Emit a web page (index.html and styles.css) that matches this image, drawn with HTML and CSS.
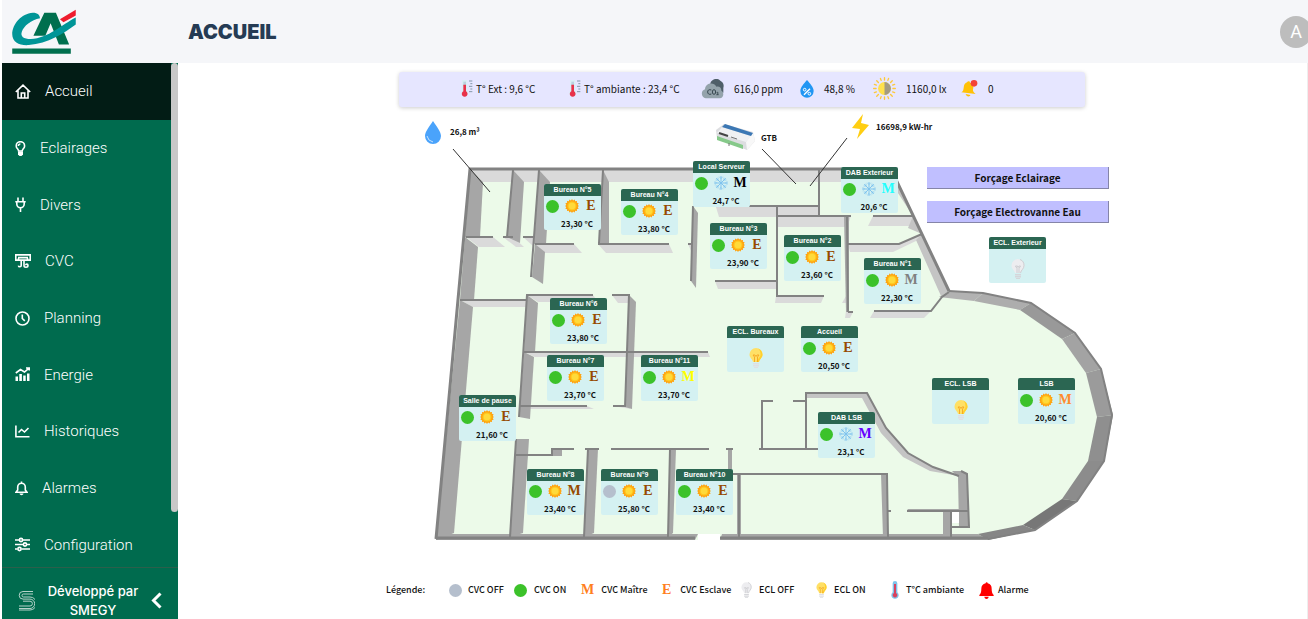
FILE: index.html
```html
<!DOCTYPE html>
<html lang="fr">
<head>
  <meta charset="UTF-8">
  <meta name="viewport" content="width=device-width, initial-scale=1.0">
  <title>Accueil</title>
  <link rel="stylesheet" href="styles.css">
</head>
<body>
  <!-- Shared icons -->
  <svg class="sprite" aria-hidden="true">
    <symbol id="i-sun" viewBox="0 0 28 28">
      <path fill="#ffa410" d="M14 0l2.2 3 3.2-2 1 3.600 3.700-.6-.4 3.700 3.600 1-1.900 3.200L28 14l-2.600 2.100 1.900 3.200-3.600 1 .4 3.700-3.700-.6-1 3.600-3.200-2L14 28l-2.200-3-3.200 2-1-3.600-3.700.6.4-3.700-3.600-1 1.900-3.200L0 14l2.600-2.100-1.900-3.200 3.600-1-.4-3.700 3.700.6 1-3.600 3.200 2z"/>
      <circle cx="14" cy="14" r="9" fill="#ffc81e"/>
      <circle cx="14" cy="14" r="6.500" fill="#ffda3a"/>
    </symbol>
    <symbol id="i-snow" viewBox="0 0 28 28">
      <g stroke="#7fc3ee" stroke-width="2" stroke-linecap="round" fill="none">
        <path d="M14 1v26M1 14h26M5 5l18 18M23 5L5 23"/>
        <path stroke-width="1.400" d="M11 2l3 3 3-3M11 26l3-3 3 3M2 11l3 3-3 3M26 11l-3 3 3 3M4 8h4V4M24 8h-4V4M4 20h4v4M24 20h-4v4"/>
      </g>
    </symbol>
    <symbol id="i-bulb-on" viewBox="0 0 28 40">
      <path fill="#ffe066" d="M14 0a13 13 0 0 1 13 13c0 7-6 9-7 15H8C7 22 1 20 1 13A13 13 0 0 1 14 0z"/>
      <path fill="#ffd02e" d="M18 1a13 13 0 0 1 9 12c0 7-6 9-7 15h-5c2-7 8-9 8-15S21 3 18 1z"/>
      <path stroke="#f5a623" stroke-width="1.800" fill="none" d="M11 28V18l-3-4h4l2 3 2-3h4l-3 4v10"/>
      <path fill="#dfe0e4" d="M8 30h12v3H8zM8 34h12v3H8zM10 38h8v2h-8z"/>
    </symbol>
    <symbol id="i-bulb-off" viewBox="0 0 28 40">
      <path fill="#ededf0" d="M14 0a13 13 0 0 1 13 13c0 7-6 9-7 15H8C7 22 1 20 1 13A13 13 0 0 1 14 0z"/>
      <path fill="none" stroke="#c9c9ce" stroke-width="1.800" d="M18 1c6 2 8 7 8 12 0 7-6 9-7 15M12 28V19l-3-5h4l1 3 2-3h3l-3 5v9"/>
      <path fill="#d5d6da" d="M8 30h12v3H8zM8 34h12v3H8zM10 38h8v2h-8z"/>
    </symbol>
    <symbol id="i-thermo" viewBox="0 0 36 54">
      <path fill="#d9eef5" d="M3 5a7 7 0 0 1 16 0v28a10 10 0 1 1-16 0z"/>
      <path fill="#b9d2de" d="M7 5h8v12H7z"/>
      <path fill="#e8324a" d="M7 14h8v20a8.500 8.500 0 1 1-8 0z"/>
      <path stroke="#6f8798" stroke-width="2.500" d="M24 3h10M28 11h6M24 19h10M28 27h6M24 35h10"/>
    </symbol>
  </svg>

  <header class="topbar">
    <a class="brand" href="#" aria-label="Accueil">
      <svg viewBox="36 26 192 136" width="64" height="45">
        <path fill="#006f4e" d="M133 37h35l40 96h-31l-25-64-16 38h-36z"/>
        <path fill="#009597" d="M120 54C119 44 114 37 98 37 64 39 36 72 36 102c0 24 22 35 50 33 58-4 106-36 142-62V52c-40 20-83 63-136 65-22 0-32-8-27-22 6-18 28-36 55-41z"/>
        <path fill="#ee1c2e" d="M180 57l48-29v18l-37 20z"/>
        <path fill="#006f4e" d="M36 145h177v16H36z"/>
      </svg>
    </a>
    <h1>ACCUEIL</h1>
    <button class="avatar" type="button" aria-label="Compte">A</button>
  </header>

  <div class="layout">
    <aside class="sidebar">
      <div class="menu-wrap">
        <nav class="menu">
          <a class="active" href="#"><svg width="16" height="15" viewBox="0 0 16 15"><path d="M.8 8L8 1.200 15.200 8M3 6.500V14h10V6.500M6.300 14V9h3.400v5"/></svg>Accueil</a>
          <a href="#"><svg width="11" height="15" viewBox="0 0 11 15"><path d="M3.600 10C3.500 8 1.200 7.500 1.200 4.900a4.200 4.200 0 0 1 8.400 0C9.600 7.500 7.300 8 7.200 10zM3.400 5c0-1.300.8-2 2-2"/><path class="solid" d="M3 10.500h5v3L6.500 15h-2L3 13.500z"/></svg>Eclairages</a>
          <a href="#"><svg width="11" height="15" viewBox="0 0 11 15"><path d="M3 .5V4M8 .5V4M.3 4.700h10.400M1.800 5v2a3.700 3.700 0 0 0 7.400 0V5M5.500 10.700V15"/></svg>Divers</a>
          <a href="#"><svg width="16" height="15" viewBox="0 0 16 15"><path d="M.8.900h14.400v5.200H.8zM3 3.600h10M3.500 4v2M12.500 4v2M6.200 7v4.600c0 1.600-2.600 1.600-2.800 0M9 7v4.500c0 2.300 4 2.300 4 0 0-1.900-2.300-1.700-2.300-.3"/></svg>CVC</a>
          <a href="#"><svg width="15" height="15" viewBox="0 0 15 15"><circle cx="7.500" cy="7.500" r="6.500"/><path d="M7.300 3.500v4l2.500 2.400"/></svg>Planning</a>
          <a href="#"><svg width="15" height="15" viewBox="0 0 15 15"><path d="M.8 6L5.500 2.500l4 2.500L14 1.200M11 1h3.300v2.500"/><path class="solid" d="M.5 9.500h2.500V14H.5zM4.300 7h2.600v7H4.300zM8.200 8.500h2.500V14H8.200zM12 6.500h2.500V14H12z"/></svg>Energie</a>
          <a href="#"><svg width="15" height="15" viewBox="0 0 15 15"><path d="M.9 1.500v11.300h13.600M3.500 8.500l3-3 3 2.500 4-4"/></svg>Historiques</a>
          <a href="#"><svg width="13" height="15" viewBox="0 0 13 15"><path d="M1 11.300h11L10.300 9V6a3.800 3.800 0 0 0-7.600 0v3zM6.500.5V2"/><path class="solid" d="M4.500 12.600h4c-.4 2.300-3.600 2.300-4 0z"/></svg>Alarmes</a>
          <a href="#"><svg width="15" height="15" viewBox="0 0 15 15"><path d="M0 3h4M8 3h7M0 7.500h8M12 7.500h3M0 12h2.500M6.500 12H15"/><circle cx="6" cy="3" r="1.600"/><circle cx="10" cy="7.500" r="1.600"/><circle cx="4.500" cy="12" r="1.600"/></svg>Configuration</a>
        </nav>
        <div class="scrollbar"><div class="thumb"></div></div>
      </div>
      <div class="credit">
        <svg width="17" height="21" viewBox="0 0 17 21"><path d="M15 1.500H5a3.800 3.800 0 0 0 0 7.600h7a4.600 4.600 0 0 1 0 9.400H1M15 4H5.500a1.500 1.500 0 0 0 0 3H12a6.500 6.500 0 0 1 0 13H1M1 16h11a2.400 2.400 0 0 0 0-4.800H5"/></svg>
        <p>Développé par SMEGY</p>
        <button type="button" aria-label="Réduire le menu"><svg width="11" height="17" viewBox="0 0 11 17"><path d="M9.500 1.500l-7 7 7 7"/></svg></button>
      </div>
    </aside>

    <main>
      <div class="board">
        <section class="measures">
          <div class="measure near"><svg width="12" height="18"><use href="#i-thermo"/></svg>T° Ext : 9,6 °C</div>
          <div class="measure near"><svg width="12" height="18"><use href="#i-thermo"/></svg>T° ambiante : 23,4 °C</div>
          <div class="measure">
            <svg width="23" height="20" viewBox="0 0 69 60"><path fill="#4f5f69" d="M28 22a18 18 0 0 1 30-17c8 4 12 12 9 22v14H40z"/><path fill="#94a3ab" d="M14 58a14 14 0 0 1-2-27c1-20 27-23 34-8 10-2 16 5 15 12 9 4 8 23-5 23z"/><g fill="none" stroke="#37474f" stroke-width="3"><path d="M31 33c-8-3-11 1-11 6s4 9 11 6"/><ellipse cx="39" cy="39" rx="5" ry="7"/><path d="M47 41c5-3 6 2 0 6h6"/></g></svg>
            616,0 ppm
          </div>
          <div class="measure">
            <svg width="14" height="18" viewBox="0 0 42 54"><path fill="#2196f3" d="M21 0c9 11 20 22 20 33a20 20 0 0 1-40 0C1 22 12 11 21 0z"/><path stroke="#fff" stroke-width="4" fill="none" d="M12 44l18-18"/><circle cx="14" cy="29" r="4" fill="none" stroke="#fff" stroke-width="3"/><circle cx="28" cy="41" r="4" fill="none" stroke="#fff" stroke-width="3"/></svg>
            48,8 %
          </div>
          <div class="measure">
            <svg width="23" height="23" viewBox="0 0 68 68"><path stroke="#fdc93a" stroke-width="4" stroke-linecap="round" d="M34 2v7M34 59v7M2 34h7M59 34h7M11 11l5 5M52 52l5 5M57 11l-5 5M16 52l-5 5M22 4l2 6M44 58l2 6M46 4l-2 6M24 58l-2 6M4 22l6 2M58 44l6 2M4 46l6-2M58 24l6-2"/><circle cx="34" cy="34" r="19" fill="#ffe14d"/><path fill="#a39b82" d="M34 15a19 19 0 0 1 0 38z"/></svg>
            1160,0 lx
          </div>
          <div class="measure">
            <svg width="17" height="17" viewBox="0 0 51 51"><path fill="#ffc107" d="M18 7c3-5 9-3 9 1 8 2 12 10 9 20-1 5 2 9 8 14L1 37c6-4 6-7 7-14C9 14 12 9 18 7zM14 42l14 3c-1 7-13 5-14-3z"/><circle cx="39" cy="10" r="10" fill="#f44336"/></svg>
            0
          </div>
        </section>

        <section class="plan" id="plan">
          <svg class="floor" viewBox="373 107 740 468" aria-hidden="true">
            <path class="ground" d="M470 169H891L949 291 983 293 1031 303 1075 333 1101 369 1113 415 1104 461 1077 501 1035 530 988 540H720V534H698V540H436z"/>

            <!-- light faces -->
            <g class="face light">
              <path d="M470 169H891L897 182H483z"/>
              <path d="M466 237H493L505 247H479z"/>
              <path d="M503 237H513L524 247H516z"/>
              <path d="M523 237H534L533 246z"/>
              <path d="M535 244H574L582 253H545z"/>
              <path d="M598 244H669L673 253H606z"/>
              <path d="M688 244H692V253z"/>
              <path d="M460 300H527V307H473z"/>
              <path d="M527 295H593L598 302H538z"/>
              <path d="M612 295H630V303H618z"/>
              <path d="M524 352H708L710 357H535z"/>
              <path d="M519 406H587L594 409H531z"/>
              <path d="M613 406H626L631 409z"/>
              <path d="M716 207H776V217H719z"/>
              <path d="M777 206H819V216H777z"/>
              <path d="M777 216H851L847 227H778z"/>
              <path d="M873 216H913L918 226H868z"/>
              <path d="M848 244H899L922 234 916 241 893 252H850z"/>
              <path d="M715 281H776V289H718z"/>
              <path d="M776 296H824L821 303H775z"/>
              <path d="M842 303L846 296V303z"/>
              <path d="M874 311H931L924 318H870z"/>
              <path d="M846 311L845 318H850L853 312z"/>
            </g>
            <path class="face mid" d="M806 393H867L886 428 908 453 933 467 959 476 930 471 903 457 881 433 862 398H806z"/>
            <path class="face mid" d="M897 182L949 291 941 296 916 240 922 234 908 228 913 216 896 190z"/>

            <!-- dark faces -->
            <g class="face dark">
              <path d="M470 169L483 182 480 237H465z"/>
              <path d="M465 237L478 247 474 300H460z"/>
              <path d="M460 300L473 307 454 533 436 540z"/>
              <path d="M513 170L524 182 520 243 507 237z"/>
              <path d="M539 170L550 182 546 244H534z"/>
              <path d="M535 244L545 252 543 284 532 277z"/>
              <path d="M603 170L609 182V244H599z"/>
              <path d="M693 206L698 213 696 288 691 281z"/>
              <path d="M527 295L538 303 535 352H524z"/>
              <path d="M524 352L534 357 530 419 519 417z"/>
              <path d="M629 295L636 302 632 409 625 407z"/>
              <path d="M516 439H529L523 533 510 537z"/>
              <path d="M552 449H562V456H552z"/>
              <path d="M588 449H598L594 533 584 537z"/>
              <path d="M670 449H676L673 533 668 537z"/>
              <path d="M728 449H732V470H728z"/>
              <path d="M844 216H849V312H846z"/>
              <path d="M737 474H741V534H737z"/>
              <path d="M881 474H887L888 537H883z"/>
              <path d="M943 511H951V537H943z"/>
              <path d="M952 471H961L967 474 969 527H959L958 477z"/>
              <path d="M907 509H968V512H911z"/>
              <path d="M436 534H698L695 540H436z"/>
              <path d="M722 534H978L988 540H720z"/>
            </g>
            <path class="hole" d="M952 512H959V523H952z"/>

            <!-- round end wall -->
            <path fill="#b2b2b2" d="M949 291L983 293 974 301 939 297z"/>
            <path fill="#adadad" d="M983 293L1031 303 1020 310 974 301z"/>
            <path fill="#999" d="M1031 303L1075 333 1062 339 1020 310z"/>
            <path fill="#a3a3a3" d="M1075 333L1101 369 1086 373 1062 339z"/>
            <path fill="#9b9b9b" d="M1101 369L1113 415 1097 417 1086 373z"/>
            <path fill="#8f8f8f" d="M1113 415L1104 461 1088 461 1097 417z"/>
            <path fill="#8c8c8c" d="M1104 461L1077 501 1062 499 1088 461z"/>
            <path fill="#777" d="M1077 501L1035 530 1023 525 1062 499z"/>
            <path fill="#868686" d="M1035 530L988 540 978 534 1023 525z"/>

            <!-- wall tops -->
            <g class="edge">
              <path class="thick" d="M436 539L470 169H891L949 291"/>
              <path d="M949 291L983 293 1031 303 1075 333 1101 369 1112 415 1104 461 1077 501 1035 530 988 539"/>
              <path class="thick" d="M436 538H695M720 538H988"/>
              <path d="M513 170L507 237M539 170L531 277M603 170L599 243M693 206L691 281"/>
              <path d="M466 237H493M503 237H513M523 237H534M535 244H574M598 244H669M688 244H692"/>
              <path d="M460 300H527M519 417L527 295H593M612 295H629L625 407M524 352H708M519 406H587M613 406H626"/>
              <path d="M516 439L510 537M516 455H552V449H574M585 449H599M588 449L584 537M611 449H709M670 449L668 537M726 449H733"/>
              <path d="M749 206H819M777 206V296H824M777 216H851M819 170V216M873 216H913M847 216L848 312M715 281H776"/>
              <path d="M848 244H899L922 234M874 311H931L942 297 949 292M848 312H853"/>
              <path d="M773 401H762V449M793 401H806M806 449V393H867L886 428 908 453 933 467 959 476M759 449H818"/>
              <path d="M733 474H887L888 537M739 474V537M907 511H968M951 511V538M952 527H969L967 474 961 471M888 511H891"/>
            </g>
            <path class="pointer" d="M453 149L490 192M762 149L796 184M847 138L810 186"/>

            <!-- water meter -->
            <path fill="#4aa3fb" d="M433 121c4 6 8 11 8 15a8 8 0 0 1-16 0c0-4 4-9 8-15z"/>
            <path fill="none" stroke="#c5e2fe" d="M427 136q1 5 6 6"/>
            <!-- energy meter -->
            <path fill="#ffce12" d="M863 114l-11 14 8 1-3 10 12-14-8-2z"/>
            <!-- controller -->
            <path fill="#dcdde0" d="M724 124l29 8 2 9-8 9-30-12-1-8z"/>
            <path fill="#f8f8f8" d="M753 132l2 9-8 9-1-8z"/>
            <path fill="#f0f1f3" d="M722 127l29 9-5 6-29-9z"/>
            <path fill="#3c78b4" d="M725 124l28 9-2 3-29-9z"/>
            <path fill="#86c98a" d="M717 136l26 9v4l-26-9z"/>
            <path stroke="#444" stroke-width="2" d="M719 133l9 3"/>
            <path stroke="#777" d="M731 137l6 2M729 143v3"/>
          </svg>
          <span class="tag water">26,8 m³</span>
          <span class="tag gtb">GTB</span>
          <span class="tag energy">16698,9 kW-hr</span>
          <div class="actions">
            <button type="button">Forçage Eclairage</button>
            <button type="button">Forçage Electrovanne Eau</button>
          </div>
        </section>

        <section class="legend">
          <b>Légende:</b>
          <div><i class="dot off"></i>CVC OFF</div>
          <div class="wide"><i class="dot"></i>CVC ON</div>
          <div class="wide"><i class="role">M</i>CVC Maître</div>
          <div class="wider"><i class="role">E</i>CVC Esclave</div>
          <div class="wide"><svg width="11" height="16"><use href="#i-bulb-off"/></svg>ECL OFF</div>
          <div class="wide"><svg width="11" height="16"><use href="#i-bulb-on"/></svg>ECL ON</div>
          <div><svg width="10" height="18" viewBox="0 0 30 54"><path fill="#7fc4ea" d="M8 7a7 7 0 0 1 14 0v27a11 11 0 1 1-14 0z"/><path fill="#d9435f" d="M12 9h6v27a7 7 0 1 1-6 0z"/></svg>T°C ambiante</div>
          <div class="close"><svg width="15" height="17" viewBox="0 0 45 51"><path fill="#f00" d="M20 4a3 3 0 0 1 6 0c9 2 12 8 12 16 0 11 2 14 6 19v3H1v-3c4-5 6-8 6-19C7 12 11 6 20 4zM16 44h13c-1 9-12 9-13 0z"/></svg>Alarme</div>
        </section>
      </div>
    </main>
  </div>

  <script>
    const originX = 373;
    const originY = 107;

    // mode: sun / snow, role: M (maître) or E (esclave)
    const rooms = [
      { name: 'Local Serveur', x: 693, y: 161, mode: 'snow', role: 'M', color: '#000', temp: '24,7 °C' },
      { name: 'DAB Exterieur', x: 841, y: 167, mode: 'snow', role: 'M', color: '#2ff', temp: '20,6 °C' },
      { name: 'Bureau N°5', x: 544, y: 184, mode: 'sun', role: 'E', temp: '23,30 °C' },
      { name: 'Bureau N°4', x: 621, y: 189, mode: 'sun', role: 'E', temp: '23,80 °C' },
      { name: 'Bureau N°3', x: 710, y: 223, mode: 'sun', role: 'E', temp: '23,90 °C' },
      { name: 'Bureau N°2', x: 784, y: 235, mode: 'sun', role: 'E', temp: '23,60 °C' },
      { name: 'Bureau N°1', x: 864, y: 258, mode: 'sun', role: 'M', color: '#808080', temp: '22,30 °C' },
      { name: 'Bureau N°6', x: 550, y: 298, mode: 'sun', role: 'E', temp: '23,80 °C' },
      { name: 'Bureau N°7', x: 547, y: 355, mode: 'sun', role: 'E', temp: '23,70 °C' },
      { name: 'Bureau N°11', x: 641, y: 355, mode: 'sun', role: 'M', color: '#ff0', temp: '23,70 °C' },
      { name: 'Accueil', x: 801, y: 326, mode: 'sun', role: 'E', temp: '20,50 °C' },
      { name: 'Salle de pause', x: 459, y: 395, mode: 'sun', role: 'E', temp: '21,60 °C' },
      { name: 'DAB LSB', x: 818, y: 412, mode: 'snow', role: 'M', color: '#60f', temp: '23,1 °C' },
      { name: 'Bureau N°8', x: 527, y: 469, mode: 'sun', role: 'M', temp: '23,40 °C' },
      { name: 'Bureau N°9', x: 601, y: 469, off: true, mode: 'sun', role: 'E', temp: '25,80 °C' },
      { name: 'Bureau N°10', x: 676, y: 469, mode: 'sun', role: 'E', temp: '23,40 °C' },
      { name: 'LSB', x: 1018, y: 378, mode: 'sun', role: 'M', color: '#ff8c2e', temp: '20,60 °C' },
      { name: 'ECL. Exterieur', x: 989, y: 237, light: 'off' },
      { name: 'ECL. Bureaux', x: 727, y: 326, light: 'on' },
      { name: 'ECL. LSB', x: 932, y: 378, light: 'on' }
    ];

    const plan = document.getElementById('plan');

    rooms.forEach(room => {
      const card = document.createElement('article');
      card.className = 'room';
      card.style.left = `${room.x - originX}px`;
      card.style.top = `${room.y - originY}px`;

      if (room.light) {
        card.innerHTML = `
          <h2>${room.name}</h2>
          <svg class="bulb" width="14" height="20"><use href="#i-bulb-${room.light}"/></svg>`;
      } else {
        card.innerHTML = `
          <h2>${room.name}</h2>
          <div class="state">
            <i class="dot ${room.off ? 'off' : ''}"></i>
            <svg width="14" height="14"><use href="#i-${room.mode}"/></svg>
            <i class="role" style="color: ${room.color || '#964b00'}">${room.role}</i>
          </div>
          <p>${room.temp}</p>`;
      }
      plan.appendChild(card);
    });
  </script>
</body>
</html>
```
FILE: styles.css
```css
* {
  box-sizing: border-box;
}

body {
  margin: 0 0 0 2px;
  min-height: 100vh;
  display: flex;
  flex-direction: column;
  overflow: hidden;
  background-color: #fff;
  color: #111;
  font-family: "Noto Sans CJK SC", "Noto Sans", sans-serif;
}

h1, h2, p {
  margin: 0;
}

i {
  font-style: normal;
}

button {
  cursor: pointer;
  font-family: inherit;
}

.sprite {
  position: absolute;
  width: 0;
  height: 0;
}

/* Header */
.topbar {
  display: flex;
  align-items: center;
  height: 63px;
  background-color: #f5f6f9;
}

.brand {
  width: 186px;
  padding-left: 10px;
}

.brand svg {
  display: block;
}

.topbar h1 {
  color: #253b54;
  font: 900 20px/24px Inter, sans-serif;
}

.avatar {
  width: 32px;
  height: 32px;
  margin: 0 -4px 0 auto;
  padding: 0;
  border: none;
  border-radius: 50%;
  background-color: #bdbdbd;
  color: #fff;
  font: 400 18px/32px Roboto, sans-serif;
}

.layout {
  flex: 1;
  display: flex;
}

/* Sidebar */
.sidebar {
  width: 176px;
  height: calc(100vh - 63px);
  display: flex;
  flex-direction: column;
  background-color: #006b4e;
  color: #fff;
}

.menu-wrap {
  flex: 1;
  min-height: 0;
  display: flex;
  overflow: hidden;
}

.menu {
  flex: 1;
  height: 510px;
  display: flex;
  flex-direction: column;
}

.menu a {
  flex: 1;
  display: flex;
  align-items: center;
  gap: 14px;
  padding-left: 13px;
  color: #fff;
  font: 300 15px/20px Roboto, sans-serif;
  text-decoration: none;
}

.menu a.active {
  background-color: #021c15;
}

.menu svg,
.credit svg {
  fill: none;
  stroke: #fff;
  stroke-width: 1.6;
}

.menu .solid {
  fill: #fff;
  stroke: none;
}

.scrollbar {
  width: 7px;
}

.thumb {
  height: 89%;
  border-radius: 4px;
  background-color: #c8c8c8;
}

.credit {
  height: 52px;
  display: flex;
  align-items: center;
  padding: 14px 16px 0;
  border-top: 1px solid #2b5f4b;
}

.credit > svg {
  stroke: #b5d3ca;
  stroke-width: 1;
}

.credit p {
  flex: 1;
  text-align: center;
  font: 500 13px/19px Inter, sans-serif;
}

.credit button {
  padding: 0;
  border: none;
  background: none;
}

.credit button svg {
  display: block;
  stroke-width: 3;
}

/* Content */
main {
  flex: 1;
  padding-top: 9px;
  box-shadow: inset -1px 0 #eee;
}

.board {
  width: 740px;
  margin: 0 auto;
}

.measures {
  display: grid;
  grid-template-columns: 108px 132px 99px 73px 88px auto;
  align-items: center;
  height: 35px;
  margin: 0 28px 0 26px;
  padding: 0 0 2px 62px;
  border-radius: 3px;
  background-color: #e6e6ff;
  box-shadow: 0 1px 4px rgba(0, 0, 0, 0.2);
  font-size: 10px;
  line-height: 16px;
}

.measure {
  display: flex;
  align-items: center;
  gap: 10px;
  white-space: nowrap;
}

.measure.near {
  gap: 3px;
}

/* Floor plan */
.plan {
  position: relative;
  height: 468px;
}

.floor {
  display: block;
  width: 740px;
  height: 468px;
  overflow: visible;
}

.ground {
  fill: #ecfae9;
}

.face.light {
  fill: #dadada;
}

.face.mid {
  fill: #c4c4c4;
}

.face.dark {
  fill: #a6a6a6;
}

.hole {
  fill: #fff;
}

.edge {
  fill: none;
  stroke: #828282;
  stroke-width: 2;
}

.edge .thick {
  stroke-width: 3;
}

.pointer {
  fill: none;
  stroke: #333;
}

.tag {
  position: absolute;
  font-size: 8px;
  font-weight: 700;
  line-height: 12px;
}

.water {
  left: 77px;
  top: 19px;
}

.gtb {
  left: 388px;
  top: 25px;
}

.energy {
  left: 503px;
  top: 14px;
}

.actions {
  position: absolute;
  left: 554px;
  top: 60px;
  width: 182px;
  display: grid;
  gap: 12px;
}

.actions button {
  height: 22px;
  padding: 0;
  border: solid #8585a8;
  border-width: 0 1px 1px 0;
  background-color: #c0bfff;
  color: #111;
  font-size: 10px;
  font-weight: 700;
  line-height: 21px;
}

.room {
  position: absolute;
  width: 57px;
  height: 46px;
  border-radius: 2px;
  background-color: #d4f1f2;
  overflow: hidden;
}

.room h2 {
  height: 12px;
  background-color: #2b6652;
  color: #fff;
  font: 700 7px/12px "Liberation Sans", sans-serif;
  text-align: center;
  white-space: nowrap;
}

.room p {
  padding: 2px 0 0 9px;
  font-size: 8px;
  font-weight: 700;
  line-height: 12px;
  text-align: center;
}

.state {
  display: grid;
  grid-template-columns: 14px 14px 14px;
  column-gap: 5px;
  align-items: center;
  height: 20px;
  padding-left: 2px;
}

.dot {
  width: 13px;
  height: 13px;
  border-radius: 50%;
  background-color: #3cc22a;
}

.dot.off {
  background-color: #b5bfcd;
}

.role {
  font: 700 14px/16px "Liberation Serif", serif;
  text-align: center;
}

.bulb {
  display: block;
  margin: 10px auto 0;
}

/* Legend */
.legend {
  display: grid;
  grid-template-columns: 63px 65px 67px 81px 79px 75px 74px 89px auto;
  align-items: center;
  height: 30px;
  padding-left: 13px;
  font-size: 9px;
  font-weight: 500;
  line-height: 12px;
}

.legend b {
  font-weight: 500;
}

.legend div {
  display: flex;
  align-items: center;
  gap: 6px;
  white-space: nowrap;
}

.legend .wide {
  gap: 7px;
}

.legend .wider {
  gap: 9px;
}

.legend .close {
  gap: 4px;
}

.legend .role {
  color: #ff7f1f;
}
```
